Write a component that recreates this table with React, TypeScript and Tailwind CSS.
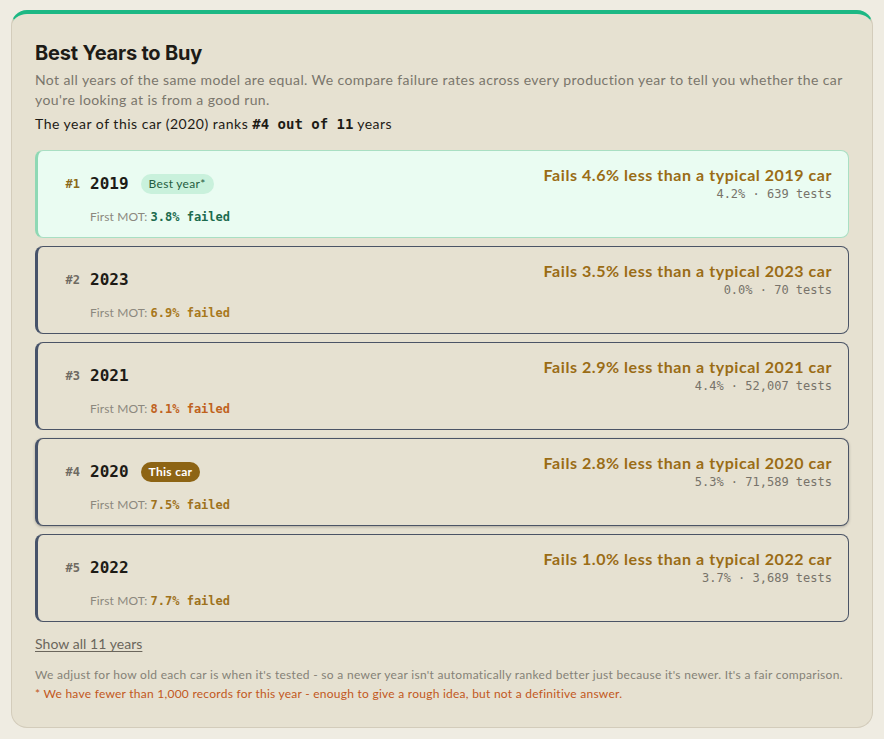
import React from "react";

type Row = {
  rank: number;
  year: string;
  badge?: "best" | "this";
  mot: string;
  motColor: string;
  fails: string;
  sub: string;
};

const rows: Row[] = [
  { rank: 1, year: "2019", badge: "best", mot: "3.8% failed", motColor: "text-[#1c6b4e]", fails: "Fails 4.6% less than a typical 2019 car", sub: "4.2% · 639 tests" },
  { rank: 2, year: "2023", mot: "6.9% failed", motColor: "text-[#a8781c]", fails: "Fails 3.5% less than a typical 2023 car", sub: "0.0% · 70 tests" },
  { rank: 3, year: "2021", mot: "8.1% failed", motColor: "text-[#c0621d]", fails: "Fails 2.9% less than a typical 2021 car", sub: "4.4% · 52,007 tests" },
  { rank: 4, year: "2020", badge: "this", mot: "7.5% failed", motColor: "text-[#9e721c]", fails: "Fails 2.8% less than a typical 2020 car", sub: "5.3% · 71,589 tests" },
  { rank: 5, year: "2022", mot: "7.7% failed", motColor: "text-[#9e721c]", fails: "Fails 1.0% less than a typical 2022 car", sub: "3.7% · 3,689 tests" },
];

const body = "font-['Lato','Noto_Sans',sans-serif]";
const mono = "font-['DejaVu_Sans_Mono','Liberation_Mono',monospace]";

function YearRow({ r }: { r: Row }) {
  const best = r.rank === 1;
  const isThis = r.badge === "this";
  const box = best
    ? "bg-[#eafcf2] border border-[#a9dfc3] border-l-[3px] border-l-[#8fd8b4]"
    : isThis
    ? "bg-[#e6e1d1] border border-[#4b5466] border-l-[3px] border-l-[#47536a] shadow-[0_1px_3px_rgba(0,0,0,0.25)]"
    : "bg-[#e6e1d1] border border-[#4b5466] border-l-[3px] border-l-[#47536a]";
  return (
    <div className={`rounded-lg h-[88px] pl-4 pr-4 pt-[14px] ${box}`}>
      <div className="flex items-center justify-between">
        <div className="flex items-center">
          <span className={`${mono} w-[26px] text-right text-[12px] font-bold ${best ? "text-[#8a6a1a]" : "text-[#6e6a62]"}`}>#{r.rank}</span>
          <span className={`${mono} ml-[10px] text-[16px] font-bold text-[#1d1b16]`}>{r.year}</span>
          {r.badge === "best" && (
            <span className={`${body} ml-[12px] h-[20px] px-[8px] rounded-full bg-[#c9f1dc] text-[#245c40] text-[12px] tracking-[0.3px] leading-[20px]`}>Best year*</span>
          )}
          {r.badge === "this" && (
            <span className={`${body} ml-[12px] h-[20px] px-[8px] rounded-full bg-[#8d6414] text-white text-[12px] font-bold tracking-[0.3px] leading-[20px]`}>This car</span>
          )}
        </div>
        <div className="flex flex-col items-end">
          <span className={`${body} text-[16px] font-bold leading-[20px] tracking-[0.55px] text-[#9a6c15]`}>{r.fails}</span>
          <span className={`${mono} text-[12px] leading-[18px] text-[#77736a]`}>{r.sub}</span>
        </div>
      </div>
      <div className="pl-[36px] mt-[5px] flex items-baseline leading-[18px]">
        <span className={`${body} text-[12px] tracking-[0.1px] text-[#8c887e]`}>First MOT:&nbsp;</span>
        <span className={`${mono} text-[12px] font-bold ${r.motColor}`}>{r.mot}</span>
      </div>
    </div>
  );
}

export default function App() {
  return (
    <div className="min-h-[739px] bg-[#efece2] pt-[10px] px-[11px] pb-[12px]">
      <div className="rounded-2xl border border-[#d3ccbb] border-t-4 border-t-[#1db884] bg-[#e6e1d1] px-[23px] pt-[25px] pb-[24px]">
        <h2 className="font-['Inter',sans-serif] text-[20px] font-bold leading-[28px] text-[#1d1b16] tracking-[-0.2px]">Best Years to Buy</h2>
        <p className={`${body} mt-[3px] text-[14px] leading-[20px] tracking-[0.4px] text-[#7a766c]`}>
          Not all years of the same model are equal. We compare failure rates across every production year to tell you whether the car you're looking at is from a good run.
        </p>
        <p className={`${body} mt-[4px] text-[14px] leading-[20px] tracking-[0.5px] text-[#1d1b16]`}>
          The year of this car (2020) ranks <span className={`${mono} font-bold tracking-normal`}>#4 out of 11</span> years
        </p>
        <div className="mt-[16px] flex flex-col gap-[8px]">
          {rows.map((r) => (
            <YearRow key={r.rank} r={r} />
          ))}
        </div>
        <button className={`${body} mt-[12px] text-[14px] leading-[20px] tracking-[0.05px] text-[#6b665c] underline underline-offset-2`}>Show all 11 years</button>
        <p className={`${body} mt-[10px] text-[12px] leading-[19px] tracking-[0.3px] text-[#858177]`}>
          We adjust for how old each car is when it's tested - so a newer year isn't automatically ranked better just because it's newer. It's a fair comparison.
        </p>
        <p className={`${body} text-[12px] leading-[19px] tracking-[0.25px] text-[#c2581c]`}>
          * We have fewer than 1,000 records for this year - enough to give a rough idea, but not a definitive answer.
        </p>
      </div>
    </div>
  );
}
